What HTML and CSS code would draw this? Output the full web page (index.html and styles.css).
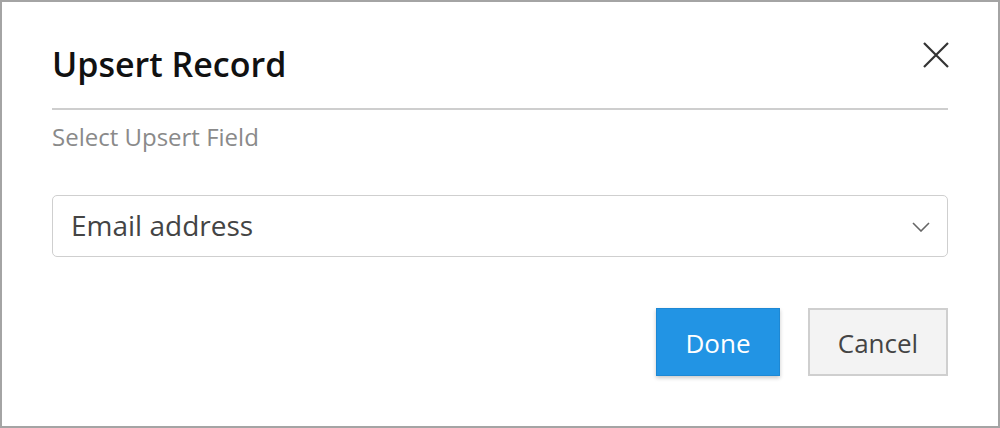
FILE: index.html
```html
<!DOCTYPE html>
<html>
<head>
<meta charset="utf-8">
<link rel="stylesheet" href="styles.css">
</head>
<body>
<div class="dialog">
  <div class="header">
    <h1 class="title">Upsert Record</h1>
    <button class="close" aria-label="Close">
      <svg width="26" height="26" viewBox="0 0 26 26"><path d="M1 1 L25 25 M25 1 L1 25" stroke="#333" stroke-width="2.2" fill="none"/></svg>
    </button>
  </div>
  <div class="divider"></div>
  <div class="label">Select Upsert Field</div>
  <div class="select">
    <span class="select-text">Email address</span>
    <svg class="chevron" width="18" height="10" viewBox="0 0 18 10"><path d="M1 1 L9 9 L17 1" stroke="#666" stroke-width="1.6" fill="none"/></svg>
  </div>
  <div class="actions">
    <button class="btn btn-primary">Done</button>
    <button class="btn btn-secondary">Cancel</button>
  </div>
</div>
</body>
</html>
```
FILE: styles.css
```css
* { box-sizing: border-box; }
html, body { margin: 0; padding: 0; background: #fff; }
body { font-family: "Open Sans", "Noto Sans", sans-serif; }
.dialog {
  width: 1000px;
  height: 428px;
  border: 2px solid #a4a4a4;
  padding: 39px 50px 0 50px;
  background: #fff;
}
.header {
  display: flex;
  justify-content: space-between;
  align-items: flex-start;
}
.title {
  margin: 0;
  font-size: 34px;
  font-weight: 600;
  line-height: 46px;
  color: #111;
}
.close {
  border: 0;
  background: none;
  padding: 0;
  margin-top: 1px;
  margin-right: -1px;
  width: 26px;
  height: 26px;
  display: flex;
}
.divider {
  margin-top: 21px;
  height: 2px;
  background: #cecece;
}
.label {
  margin-top: 10px;
  font-size: 24px;
  line-height: 33px;
  color: #8a8a8a;
}
.select {
  margin-top: 42px;
  height: 62px;
  border: 1px solid #cfcfcf;
  border-radius: 5px;
  display: flex;
  align-items: center;
  justify-content: space-between;
  padding: 0 17px 0 18px;
}
.select-text {
  font-size: 28px;
  line-height: 38px;
  color: #444;
  margin-bottom: 3px;
}
.chevron { margin-top: 2px; }
.actions {
  margin-top: 51px;
  display: flex;
  justify-content: flex-end;
  gap: 28px;
}
.btn {
  height: 68px;
  font-family: "Open Sans", "Noto Sans", sans-serif;
  font-size: 26px;
  padding: 1px 0 0 0;
  border-radius: 0;
}
.btn-primary {
  width: 124px;
  background: #2294e4;
  color: #fff;
  border: 1px solid #1d88d4;
  box-shadow: 0 2px 4px rgba(0,0,0,0.22);
}
.btn-secondary {
  width: 140px;
  background: #f3f3f3;
  color: #444;
  border: 2px solid #cfcfcf;
}
```
